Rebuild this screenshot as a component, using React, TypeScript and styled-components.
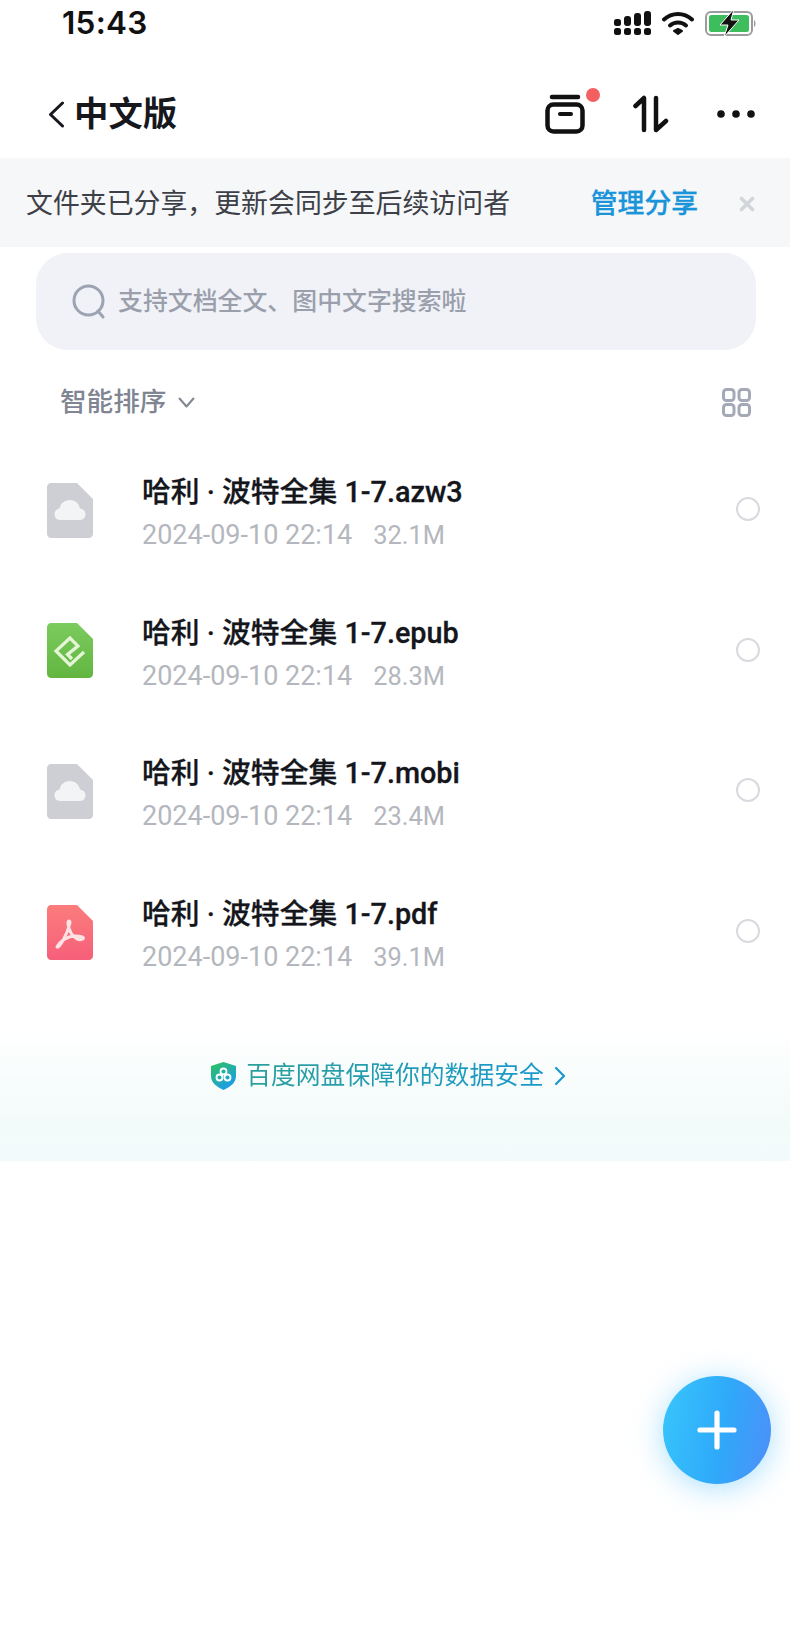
import React from "react";
import styled, { createGlobalStyle } from "styled-components";

const Global = createGlobalStyle`
  html, body { margin: 0; padding: 0; background: #fff; }
  body { font-family: "Inter", "Noto Sans CJK SC", sans-serif; }
`;
const CJK = `"Roboto", "Noto Sans CJK SC", sans-serif`;

const Page = styled.div`
  width: 790px; height: 1630px; position: relative; overflow: hidden; background: #fff;
  display: flex; flex-direction: column;
`;
const StatusBar = styled.div`
  height: 46px; display: flex; align-items: center; padding: 0 33px 0 62px;
`;
const Time = styled.div`
  font: 600 31.5px/46px "Inter", sans-serif; color: #111; flex: 1; letter-spacing: 0.3px;
`;
const StatusIcons = styled.div`display: flex; align-items: center; gap: 11px;`;
const Nav = styled.div`
  height: 112px; box-sizing: border-box; padding: 24px 35px 0 48px;
  display: flex; align-items: center;
`;
const Title = styled.div`
  font: 700 34.4px/48px ${CJK}; color: #16181d; margin-left: 9px; flex: 1;
`;
const NavIcons = styled.div`display: flex; align-items: center;`;
const BoxWrap = styled.div`
  position: relative; width: 40px; height: 40px; margin-right: 48px;
`;
const Dot = styled.span`
  position: absolute; right: -15px; top: -6px; width: 14px; height: 14px;
  border-radius: 50%; background: #f4605f;
`;
const SortWrap = styled.div`width: 36px; height: 38px; margin-right: 48px;`;
const Banner = styled.div`
  height: 89px; background: #f6f7f8; display: flex; align-items: center; padding: 2px 35px 0 26px;
  box-sizing: border-box;
`;
const BannerText = styled.div`
  font: 400 26.9px/36px ${CJK}; color: #3d4047; flex: 1; white-space: nowrap;
`;
const BannerLink = styled.div`
  font: 500 26.8px/36px ${CJK}; color: #1a94d9; margin-right: 41px;
  -webkit-text-stroke: 0.3px #1a94d9;
`;
const Search = styled.div`
  margin: 6px 34px 0 36px; height: 97px; border-radius: 32px; background: #f0f2f7;
  display: flex; align-items: center; padding-left: 36px; gap: 11px;
`;
const SearchText = styled.div`
  font: 500 24.9px/34px ${CJK}; color: #9a9fab; white-space: nowrap;
`;
const SortBar = styled.div`
  height: 102px; display: flex; align-items: center; padding: 2px 39px 0 60px; box-sizing: border-box;
`;
const SortLabel = styled.div`
  font: 500 26.6px/36px ${CJK}; color: #7f8592; margin-right: 12px;
`;
const Spacer = styled.div`flex: 1;`;
const List = styled.div`display: flex; flex-direction: column; margin-top: -13px;`;
const Row = styled.div`
  height: 140.6px; display: flex; align-items: center; padding: 0 30px 0 47px;
`;
const FileIcon = styled.div`width: 46px; height: 55px; margin-right: 49px; margin-top: 2px;`;
const RowText = styled.div`flex: 1; display: flex; flex-direction: column; gap: 7px; margin-top: 9px;`;
const RowTitle = styled.div`
  font: 500 28.8px/36px ${CJK}; color: #14161b; white-space: pre; -webkit-text-stroke: 0.3px #14161b;
`;
const RowMeta = styled.div`
  font: 400 27px/36px ${CJK}; color: #b4b7bd; display: flex; gap: 21px;
`;
const MetaSize = styled.span`font-size: 25.4px;`;
const Radio = styled.div`
  width: 24px; height: 24px; box-sizing: border-box; border: 2px solid #d8dadf; border-radius: 50%;
`;
const Footer = styled.div`
  margin-top: 26px; height: 134px; box-sizing: border-box; padding: 0 13px 36px 0;
  background: linear-gradient(180deg, #ffffff 0%, #f3fbfa 70%, #f2fafb 100%);
  display: flex; align-items: center; justify-content: center; gap: 10px;
`;
const FooterText = styled.div`
  font: 400 24.8px/34px ${CJK};
  background: linear-gradient(90deg, #2a9f9c, #1a98cb);
  -webkit-background-clip: text; background-clip: text; color: transparent;
`;
const Fab = styled.div`
  position: absolute; left: 663px; top: 1376px; width: 108px; height: 108px; border-radius: 50%;
  background: linear-gradient(100deg, #38c6fc 0%, #2fa9fa 55%, #4f8ef8 100%);
  box-shadow: 0 4px 30px rgba(56, 180, 250, 0.42);
  display: flex; align-items: center; justify-content: center;
`;

const Signal = () => (
  <svg width="37" height="25" viewBox="0 0 37 25" fill="#111">
    {[0, 10, 20, 30].map((x) => <rect key={x} x={x} y="17" width="7" height="7" rx="2.5" />)}
    <rect x="0" y="8" width="7" height="7" rx="2.5" />
    <rect x="10" y="5" width="7" height="10" rx="3" />
    <rect x="20" y="2" width="7" height="13" rx="3" />
    <rect x="30" y="0" width="7" height="15" rx="3" />
  </svg>
);
const Wifi = () => (
  <svg width="32" height="25" viewBox="0 0 32 25" fill="none" stroke="#111" strokeWidth="4" strokeLinecap="round">
    <path d="M2 8.5C10 1 22 1 30 8.5" />
    <path d="M8 14.5C12.5 10.5 19.5 10.5 24 14.5" />
    <path d="M12 20L16 23L20 20L16 18Z" fill="#111" strokeWidth="2" strokeLinejoin="round" />
  </svg>
);
const Battery = () => (
  <svg width="52" height="28" viewBox="0 0 52 28">
    <rect x="1" y="3" width="46" height="23" rx="5" fill="#fff" stroke="#9b9d9c" strokeWidth="2" />
    <rect x="4" y="6" width="40" height="17" rx="2.5" fill="#3dbd5c" />
    <path d="M49 11C51 12 51 17 49 18Z" fill="#9b9d9c" />
    <path d="M29 0L15 16H23L19 28L34 11H26Z" fill="#111" stroke="#fff" strokeWidth="1" />
  </svg>
);
const Back = () => (
  <svg width="17" height="27" viewBox="0 0 17 27" fill="none" stroke="#16181d" strokeWidth="3" strokeLinecap="round" strokeLinejoin="round">
    <path d="M14.5 2L2.5 13.5L14.5 25" />
  </svg>
);
const BoxIcon = () => (
  <svg width="40" height="40" viewBox="0 0 40 40" fill="none" stroke="#111" strokeWidth="4.5" strokeLinecap="round">
    <path d="M7 3H33" />
    <rect x="2.5" y="10.5" width="35" height="27" rx="6" />
    <path d="M15 20H26" strokeWidth="4" />
  </svg>
);
const SortIcon = () => (
  <svg width="36" height="38" viewBox="0 0 36 38" fill="none" stroke="#111" strokeWidth="4.5" strokeLinecap="round" strokeLinejoin="round">
    <path d="M2.5 11L11 3V35" />
    <path d="M23 3V35L33 26" />
  </svg>
);
const Dots = () => (
  <svg width="38" height="8" viewBox="0 0 38 8" fill="#111">
    <circle cx="4" cy="4" r="3.8" /><circle cx="19" cy="4" r="3.8" /><circle cx="34" cy="4" r="3.8" />
  </svg>
);
const Close = () => (
  <svg width="16" height="16" viewBox="0 0 16 16" stroke="#d2d5da" strokeWidth="3.6" strokeLinecap="round">
    <path d="M2.5 2.5L13.5 13.5M13.5 2.5L2.5 13.5" />
  </svg>
);
const SearchIcon = () => (
  <svg width="35" height="35" viewBox="0 0 35 35" fill="none" stroke="#9ca3b2" strokeWidth="3">
    <circle cx="16.5" cy="16.5" r="14.5" />
    <path d="M26 27L31 33" strokeLinecap="round" />
  </svg>
);
const Chevron = () => (
  <svg width="17" height="11" viewBox="0 0 17 11" fill="none" stroke="#7f8592" strokeWidth="2" strokeLinecap="round" strokeLinejoin="round">
    <path d="M1.5 1.5L8.5 9.5L15.5 1.5" />
  </svg>
);
const GridIcon = () => (
  <svg width="29" height="29" viewBox="0 0 29 29" fill="none" stroke="#a3a9b6" strokeWidth="3">
    <rect x="1.5" y="1.5" width="10.5" height="11" rx="3" />
    <rect x="17" y="1.5" width="10.5" height="11" rx="3" />
    <rect x="1.5" y="16.5" width="10.5" height="11" rx="3" />
    <rect x="17" y="16.5" width="10.5" height="11" rx="3" />
  </svg>
);
const docPath = "M4 0H30L46 16V51C46 53 44 55 42 55H4C2 55 0 53 0 51V4C0 2 2 0 4 0Z";
const CloudDoc = () => (
  <svg width="46" height="55" viewBox="0 0 46 55">
    <path d={docPath} fill="#cdcfd4" />
    <path d="M13 37C9.5 37 7.5 34 7.5 31C7.5 28 9.5 26 12.5 25.5C13.5 20.5 17.5 17 23 17C28 17 32 20.5 33 25.5C36 26 38.5 28 38.5 31C38.5 34 36.5 37 33 37Z" fill="#f3f4f6" />
  </svg>
);
const EpubDoc = () => (
  <svg width="46" height="55" viewBox="0 0 46 55">
    <defs>
      <linearGradient id="epubg" x1="0" y1="0" x2="0" y2="1">
        <stop offset="0" stopColor="#7ccb5e" /><stop offset="1" stopColor="#62b640" />
      </linearGradient>
    </defs>
    <path d={docPath} fill="url(#epubg)" />
    <path d="M37 29L23 42L9 28L23 15L31 23L20.5 31.5L25 36" fill="none" stroke="#e4f6d6" strokeWidth="3.2" strokeLinejoin="miter" />
  </svg>
);
const PdfDoc = () => (
  <svg width="46" height="55" viewBox="0 0 46 55">
    <defs>
      <linearGradient id="pdfg" x1="0" y1="0" x2="0" y2="1">
        <stop offset="0" stopColor="#fb7c7c" /><stop offset="1" stopColor="#f6607a" />
      </linearGradient>
    </defs>
    <path d={docPath} fill="url(#pdfg)" />
    <path d="M22 16C20 16 21 22 24 28C27 33 32 36 36 34C38 32 33 31 28 31C21 31 13 36 10 42C12 44 20 30 23 18C23 16 23 16 22 16Z" fill="none" stroke="#fde3e4" strokeWidth="3" strokeLinejoin="round" />
  </svg>
);
const Shield = () => (
  <svg width="25" height="28" viewBox="0 0 25 28">
    <defs>
      <linearGradient id="sh" x1="0" y1="0" x2="0.6" y2="1">
        <stop offset="0" stopColor="#2cc45a" /><stop offset="1" stopColor="#1c9bea" />
      </linearGradient>
    </defs>
    <path d="M12.5 0L25 4V14C25 21 19 25 12.5 28C6 25 0 21 0 14V4Z" fill="url(#sh)" />
    <g fill="none" stroke="#fff" strokeWidth="1.8">
      <circle cx="12.5" cy="9.5" r="3" /><circle cx="8.5" cy="15.5" r="3" /><circle cx="16.5" cy="15.5" r="3" />
    </g>
  </svg>
);
const FooterChevron = () => (
  <svg width="12" height="20" viewBox="0 0 12 20" fill="none" stroke="#1a98cb" strokeWidth="2.2" strokeLinecap="round" strokeLinejoin="round">
    <path d="M2 2L10 10L2 18" />
  </svg>
);
const Plus = () => (
  <svg width="40" height="40" viewBox="0 0 40 40" stroke="#fff" strokeWidth="5.2" strokeLinecap="round">
    <path d="M20 3V37M3 20H37" />
  </svg>
);

const files = [
  { name: "哈利 · 波特全集 1-7.azw3", size: "32.1M", Icon: CloudDoc },
  { name: "哈利 · 波特全集 1-7.epub", size: "28.3M", Icon: EpubDoc },
  { name: "哈利 · 波特全集 1-7.mobi", size: "23.4M", Icon: CloudDoc },
  { name: "哈利 · 波特全集 1-7.pdf", size: "39.1M", Icon: PdfDoc },
];

export default function App() {
  return (
    <Page>
      <Global />
      <StatusBar>
        <Time>15:43</Time>
        <StatusIcons><Signal /><Wifi /><Battery /></StatusIcons>
      </StatusBar>
      <Nav>
        <Back />
        <Title>中文版</Title>
        <NavIcons>
          <BoxWrap><BoxIcon /><Dot /></BoxWrap>
          <SortWrap><SortIcon /></SortWrap>
          <Dots />
        </NavIcons>
      </Nav>
      <Banner>
        <BannerText>文件夹已分享，更新会同步至后续访问者</BannerText>
        <BannerLink>管理分享</BannerLink>
        <Close />
      </Banner>
      <Search>
        <SearchIcon />
        <SearchText>支持文档全文、图中文字搜索啦</SearchText>
      </Search>
      <SortBar>
        <SortLabel>智能排序</SortLabel>
        <Chevron />
        <Spacer />
        <GridIcon />
      </SortBar>
      <List>
        {files.map(({ name, size, Icon }) => (
          <Row key={name}>
            <FileIcon><Icon /></FileIcon>
            <RowText>
              <RowTitle>{name}</RowTitle>
              <RowMeta><span>2024-09-10 22:14</span><MetaSize>{size}</MetaSize></RowMeta>
            </RowText>
            <Radio />
          </Row>
        ))}
      </List>
      <Footer>
        <Shield />
        <FooterText>百度网盘保障你的数据安全</FooterText>
        <FooterChevron />
      </Footer>
      <Fab><Plus /></Fab>
    </Page>
  );
}
